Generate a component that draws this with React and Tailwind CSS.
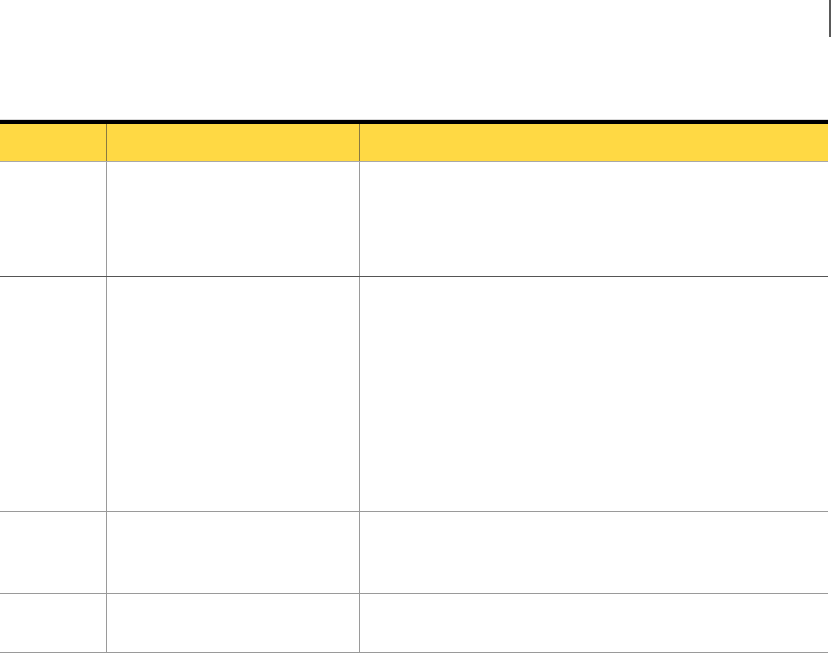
import React from "react";

export default function App() {
  const rows = [114, 234, 81, 58];
  return (
    <div className="w-[831px] h-[654px] bg-white overflow-hidden" style={{ fontFamily: '"Liberation Sans", sans-serif' }}>
      <div className="h-[119px] flex justify-end">
        <div className="w-[2px] h-[37px] bg-[#5a5a5a]" />
      </div>
      <div className="w-[828px] border-t border-[#d8d8d8]">
        <div className="border-t-4 border-black">
          <div className="grid grid-cols-[107px_253px_1fr] h-[38px] bg-[#ffd944] border-b border-[#a8a8a8]">
            <div className="border-r border-[#8a7a40]" />
            <div className="border-r border-[#8a7a40]" />
            <div />
          </div>
          {rows.map((h, i) => (
            <div
              key={i}
              className={`grid grid-cols-[107px_253px_1fr] border-b ${i === 0 ? "border-[#555555]" : "border-[#9a9a9a]"}`}
              style={{ height: h + 1 }}
            >
              <div className="border-r border-[#9a9a9a]" />
              <div className="border-r border-[#9a9a9a]" />
              <div />
            </div>
          ))}
        </div>
      </div>
    </div>
  );
}
